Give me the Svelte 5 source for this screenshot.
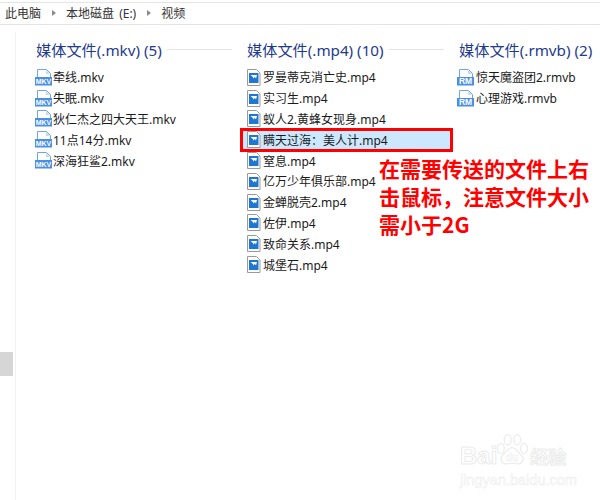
<script>
  const groups = [
    { title: '媒体文件(.mkv) (5)', icon: 'mkv', cls: 'g1', files: ['牵线.mkv','失眠.mkv','狄仁杰之四大天王.mkv','11点14分.mkv','深海狂鲨2.mkv'] },
    { title: '媒体文件(.mp4) (10)', icon: 'mp4', cls: 'g2', files: ['罗曼蒂克消亡史.mp4','实习生.mp4','蚁人2.黄蜂女现身.mp4','瞒天过海：美人计.mp4','窒息.mp4','亿万少年俱乐部.mp4','金蝉脱壳2.mp4','佐伊.mp4','致命关系.mp4','城堡石.mp4'] },
    { title: '媒体文件(.rmvb) (2)', icon: 'rm', cls: 'g3', files: ['惊天魔盗团2.rmvb','心理游戏.rmvb'] }
  ];
</script>

<div class="page">
  <header class="crumbs">
    <span>此电脑</span><i class="sep"></i><span class="disk">本地磁盘 (E:)</span><i class="sep"></i><span>视频</span>
  </header>
  <div class="body">
    <aside class="side"><div class="thumb"></div></aside>
    <main class="cols">
      {#each groups as g}
        <section class={g.cls}>
          <h2><span>{g.title}</span><b></b></h2>
          <ul>
            {#each g.files as f}
              <li class:sel={f.startsWith('瞒天')}>
                {#if g.icon === 'mp4'}
                  <svg width="14" height="17" viewBox="0 0 14 17">
                    <path d="M.5.500h9l3.500 3.500v12.500h-12.500z" fill="#fff" stroke="#9a9a9a"/>
                    <rect x="2" y="4" width="9.500" height="10" fill="#1e78d2"/>
                    <path d="M3.500 6h6.500l-1 3.500-1.200-1.800-1.100 1.800-1.100-1.800z" fill="#fff"/>
                  </svg>
                {:else}
                  <svg width="18" height="17" viewBox="0 0 18 17">
                    <path d="M2.500.5h9l4 4v11h-13z" fill="#fff" stroke="#6ea6e6"/>
                    <path d="M11 1v4h4z" fill="#c4d9f2"/>
                    <rect x="0" y="8" width="17" height="8.500" fill="#4a90e2"/>
                    <text x="8.500" y="15.200" class={g.icon === 'rm' ? 'tag big' : 'tag'} text-anchor="middle">{g.icon.toUpperCase()}</text>
                  </svg>
                {/if}
                <span>{f}</span>
              </li>
            {/each}
          </ul>
        </section>
      {/each}
    </main>
  </div>

  <p class="note">在需要传送的文件上右<br>击鼠标，注意文件大小<br>需小于2G</p>

  <div class="mark">
    <div class="logo">
      <span>Bai</span>
      <svg width="36" height="36" viewBox="0 0 42 42">
        <g fill="#fff" stroke="#ececec" stroke-width="1.500">
          <ellipse cx="8" cy="18" rx="4" ry="6"/>
          <ellipse cx="16" cy="8" rx="4" ry="6"/>
          <ellipse cx="27" cy="8" rx="4" ry="6"/>
          <ellipse cx="35" cy="18" rx="4" ry="6"/>
          <path d="M21 17c-5 0-7 6-11 9-4 4-1 11 5 10 4-1 8-1 12 0 6 1 9-6 5-10-4-3-6-9-11-9z"/>
        </g>
        <text x="21" y="33" class="du" text-anchor="middle">du</text>
      </svg>
      <span class="jy">经验</span>
    </div>
    <div class="url">jingyan.baidu.com</div>
  </div>
</div>

<style>
  :global(body) { margin: 0; background: #fff; }
  .page {
    position: relative;
    width: 600px;
    height: 500px;
    overflow: hidden;
    background: #fff;
    font-family: "Noto Sans", "Noto Sans CJK SC", sans-serif;
    color: #1a1a1a;
  }
  .crumbs {
    box-sizing: border-box;
    height: 23px;
    margin-top: 2px;
    padding: 0 0 2px 5px;
    border-top: 1px solid #e4e4e4;
    border-bottom: 1px solid #e4e4e4;
    display: flex;
    align-items: center;
    font-size: 12px;
    color: #333;
  }
  .disk { word-spacing: 2px; }
  .sep {
    width: 0;
    height: 0;
    margin: 0 10px 0 11px;
    border-left: 4px solid #8a8a8a;
    border-top: 3px solid transparent;
    border-bottom: 3px solid transparent;
  }
  .body { display: flex; height: 475px; }
  .side {
    box-sizing: border-box;
    width: 16px;
    margin-top: 7px;
    border-right: 1px solid #f0f0f0;
    padding-top: 320px;
  }
  .thumb { width: 13px; height: 24px; background: #d6d6d6; }
  .cols { display: flex; padding-top: 14px; }
  section { box-sizing: border-box; }
  .g1 { width: 227px; padding-left: 20px; }
  .g2 { width: 212px; padding-left: 4px; }
  .g3 { width: 145px; padding-left: 4px; }
  h2 {
    margin: 0 0 8px;
    display: flex;
    align-items: center;
    gap: 5px;
    height: 20px;
    font-size: 15.200px;
    font-weight: 400;
    color: #1e3a8c;
    white-space: nowrap;
  }
  h2 b { flex: 1; height: 1px; background: #e4e4e4; }
  .g1 h2 { margin-right: 11px; }
  .g2 h2 { margin-right: 11px; }
  .g3 h2 b { display: none; }
  ul { list-style: none; margin: 0; padding: 0; }
  .g1 ul { margin-left: -1px; }
  .g3 ul { margin-left: -2px; }
  li {
    display: flex;
    align-items: center;
    gap: 1px;
    height: 20.800px;
    font-size: 12px;
    white-space: nowrap;
  }
  .g1 li { gap: 0; }
  .g2 li { gap: 2px; }
  .g2 li.sel {
    box-sizing: border-box;
    width: 213px;
    margin: -1.600px 0 -1.600px -7px;
    padding-left: 4px;
    background: #cce8ff;
    border: 3px solid #f00;
    height: 24px;
  }
  svg { flex: none; }
  .tag { font: 700 7px "Liberation Sans", sans-serif; fill: #fff; }
  .tag.big { font-size: 8.500px; }
  .note {
    position: absolute;
    left: 379px;
    top: 154px;
    margin: 0;
    font-size: 21px;
    line-height: 28px;
    font-weight: 700;
    color: #f00;
    white-space: nowrap;
    font-family: "Noto Sans CJK SC", "Noto Sans", sans-serif;
  }
  .mark {
    position: absolute;
    left: 460px;
    top: 435px;
    color: #fff;
    -webkit-text-stroke: 1px #ececec;
    font-family: "Liberation Sans", "Noto Sans CJK SC", sans-serif;
  }
  .logo {
    display: flex;
    align-items: flex-end;
    height: 34px;
    font-size: 24px;
    font-weight: 700;
    line-height: 26px;
  }
  .logo svg { margin-left: -3px; }
  .jy { font-size: 18px; line-height: 22px; }
  .du { font: 700 12px "Liberation Sans", sans-serif; fill: #fff; stroke: #ececec; stroke-width: .5px; }
  .url { font-size: 14.500px; line-height: 14px; margin-top: 4px; font-weight: 400; -webkit-text-stroke-width: .5px; }
</style>
